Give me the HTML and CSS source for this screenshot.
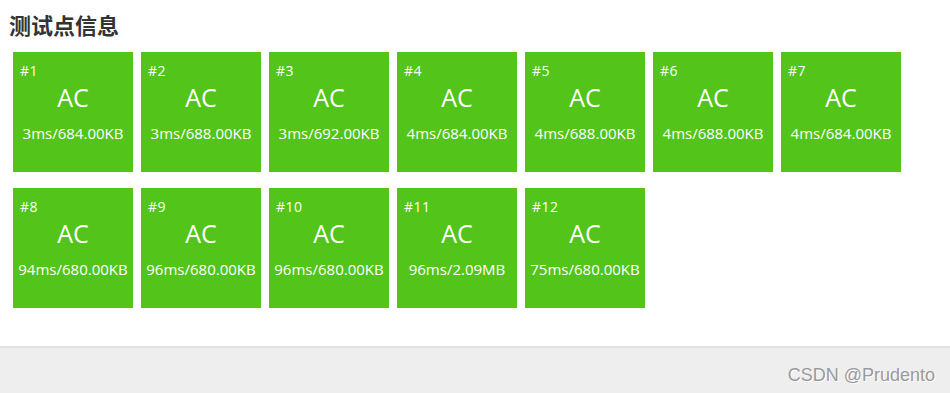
FILE: index.html
```html
<!DOCTYPE html>
<html lang="en">
<head>
    <meta charset="UTF-8">
    <meta name="viewport" content="width=device-width, initial-scale=1.0">
    <title>测试点信息</title>
    <link rel="stylesheet" href="styles.css">
</head>
<body>
    <div class="main">
        <h3 class="title">测试点信息</h3>
        <div class="cases">
            <div class="case"><span class="num">#1</span><span class="status">AC</span><span class="info">3ms/684.00KB</span></div>
            <div class="case"><span class="num">#2</span><span class="status">AC</span><span class="info">3ms/688.00KB</span></div>
            <div class="case"><span class="num">#3</span><span class="status">AC</span><span class="info">3ms/692.00KB</span></div>
            <div class="case"><span class="num">#4</span><span class="status">AC</span><span class="info">4ms/684.00KB</span></div>
            <div class="case"><span class="num">#5</span><span class="status">AC</span><span class="info">4ms/688.00KB</span></div>
            <div class="case"><span class="num">#6</span><span class="status">AC</span><span class="info">4ms/688.00KB</span></div>
            <div class="case"><span class="num">#7</span><span class="status">AC</span><span class="info">4ms/684.00KB</span></div>
            <div class="case"><span class="num">#8</span><span class="status">AC</span><span class="info">94ms/680.00KB</span></div>
            <div class="case"><span class="num">#9</span><span class="status">AC</span><span class="info">96ms/680.00KB</span></div>
            <div class="case"><span class="num">#10</span><span class="status">AC</span><span class="info">96ms/680.00KB</span></div>
            <div class="case"><span class="num">#11</span><span class="status">AC</span><span class="info">96ms/2.09MB</span></div>
            <div class="case"><span class="num">#12</span><span class="status">AC</span><span class="info">75ms/680.00KB</span></div>
        </div>
    </div>
    <div class="footer">
        <span class="mark">CSDN @Prudento</span>
    </div>
</body>
</html>
```

FILE: styles.css
```css
body {
    margin: 0;
    background-color: white;
    font-family: "Open Sans", "Noto Sans CJK SC", sans-serif;
}
.main {
    height: 346px;
    padding: 0 9px;
    box-sizing: border-box;
}
.title {
    margin: 0;
    padding-top: 9px;
    height: 52px;
    box-sizing: border-box;
    font-size: 22px;
    line-height: 30px;
    font-weight: bold;
    color: #333;
    font-family: "Noto Sans CJK SC", sans-serif;
}
.cases {
    display: flex;
    flex-wrap: wrap;
    gap: 16px 8px;
    margin-left: 4px;
    width: 900px;
}
.case {
    width: 120px;
    height: 120px;
    background-color: #52c41a;
    color: white;
    display: flex;
    flex-direction: column;
    align-items: center;
}
.case .num {
    align-self: flex-start;
    margin: 11px 0 0 7px;
    font-size: 14px;
    line-height: 16px;
    font-weight: 500;
    letter-spacing: 0.5px;
}
.case .status {
    font-size: 25px;
    line-height: 30px;
    margin-top: 3px;
}
.case .info {
    font-size: 15px;
    line-height: 18px;
    margin-top: 12px;
    font-weight: 500;
    white-space: nowrap;
}
.footer {
    height: 47px;
    background-color: #eeeeee;
    border-top: 2px solid #e3e3e3;
    box-sizing: border-box;
    display: flex;
    justify-content: flex-end;
    align-items: flex-end;
    padding: 0 15px 7px 0;
}
.mark {
    font-family: "Liberation Sans", Arial, sans-serif;
    font-size: 18px;
    color: #9a9a9a;
    text-shadow: 1px 1px 0 #fff;
}
```
